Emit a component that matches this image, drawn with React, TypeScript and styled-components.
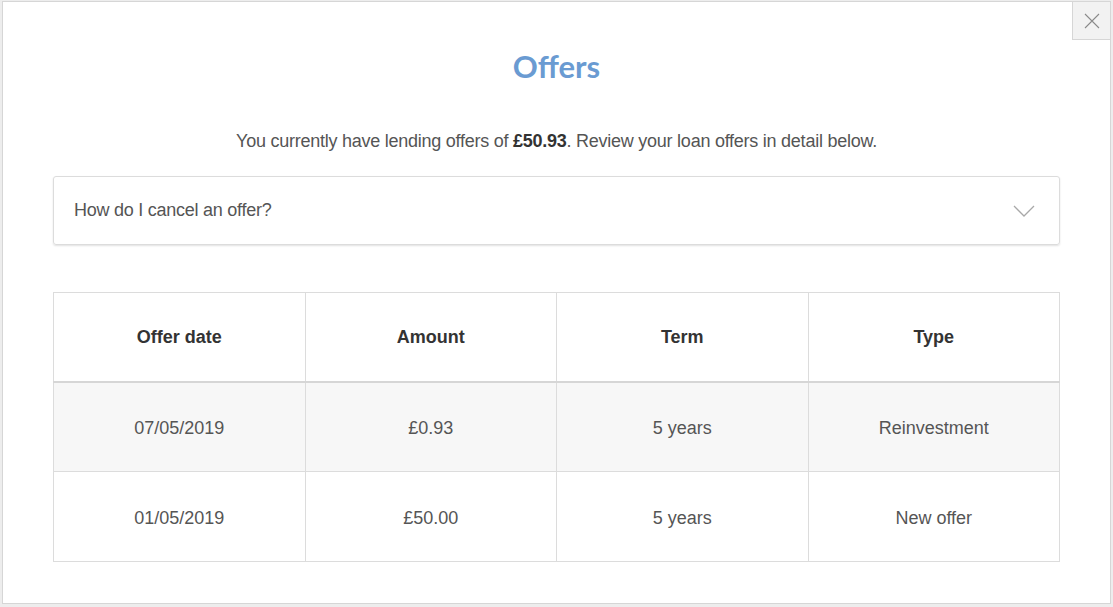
import React from "react";
import styled, { createGlobalStyle } from "styled-components";

const Global = createGlobalStyle`
  html, body { margin: 0; padding: 0; background: #ededed; }
  body { font-family: "Liberation Sans", Arial, sans-serif; }
  * { box-sizing: border-box; }
`;

const Page = styled.div`
  padding: 1px 2px 3px 2px;
  height: 607px;
`;

const Modal = styled.div`
  position: relative;
  height: 603px;
  background: #fff;
  border: 1px solid #d6d6d6;
  padding: 44px 50px 0 50px;
  display: flex;
  flex-direction: column;
`;

const CloseButton = styled.button`
  position: absolute;
  top: -1px;
  right: -1px;
  width: 39px;
  height: 39px;
  background: #f2f2f2;
  border: 1px solid #d6d6d6;
  padding: 0;
  display: flex;
  align-items: center;
  justify-content: center;
  cursor: pointer;
`;

const Title = styled.h1`
  margin: 0;
  text-align: center;
  font-family: "Lato", "Open Sans", sans-serif;
  font-weight: 700;
  font-size: 31px;
  line-height: 40px;
  color: #6a9bd2;
`;

const Intro = styled.p`
  margin: 43px 0 0;
  text-align: center;
  font-size: 18px;
  line-height: 24px;
  color: #555;
  letter-spacing: -0.25px;
  b { color: #333; font-weight: 700; }
`;

const Accordion = styled.div`
  margin-top: 23px;
  height: 69px;
  border: 1px solid #dcdcdc;
  border-radius: 3px;
  box-shadow: 0 1px 2px rgba(0,0,0,0.12);
  display: flex;
  align-items: center;
  justify-content: space-between;
  padding: 0 24px 0 20px;
  font-size: 18px;
  color: #555;
  letter-spacing: -0.25px;
`;

const Table = styled.table`
  margin-top: 47px;
  width: 100%;
  border-collapse: collapse;
  table-layout: fixed;
`;

const Th = styled.th`
  height: 89px;
  border: 1px solid #dcdcdc;
  border-bottom: 2px solid #d6d6d6;
  font-size: 18px;
  font-weight: 700;
  color: #333;
  text-align: center;
  padding-top: 2px;
`;

const Tr = styled.tr<{ $shade?: boolean }>`
  background: ${(p) => (p.$shade ? "#f7f7f7" : "#fff")};
`;

const Td = styled.td`
  height: 90px;
  border: 1px solid #dcdcdc;
  text-align: center;
  font-size: 18px;
  color: #555;
  padding-top: 4px;
`;

const rows = [
  ["07/05/2019", "£0.93", "5 years", "Reinvestment"],
  ["01/05/2019", "£50.00", "5 years", "New offer"],
];

export default function App() {
  return (
    <>
      <Global />
      <Page>
        <Modal>
          <CloseButton aria-label="Close">
            <svg width="16" height="16" viewBox="0 0 16 16">
              <path d="M1 1L15 15M15 1L1 15" stroke="#8a8a8a" strokeWidth="1.1" fill="none" />
            </svg>
          </CloseButton>
          <Title>Offers</Title>
          <Intro>
            You currently have lending offers of <b>£50.93</b>. Review your loan offers in detail below.
          </Intro>
          <Accordion>
            <span>How do I cancel an offer?</span>
            <svg width="22" height="12" viewBox="0 0 22 12">
              <path d="M1 1L11 11L21 1" stroke="#a8a8a8" strokeWidth="1.3" fill="none" />
            </svg>
          </Accordion>
          <Table>
            <thead>
              <tr>
                <Th>Offer date</Th>
                <Th>Amount</Th>
                <Th>Term</Th>
                <Th>Type</Th>
              </tr>
            </thead>
            <tbody>
              {rows.map((r, i) => (
                <Tr key={i} $shade={i === 0}>
                  {r.map((c, j) => (
                    <Td key={j}>{c}</Td>
                  ))}
                </Tr>
              ))}
            </tbody>
          </Table>
        </Modal>
      </Page>
    </>
  );
}
